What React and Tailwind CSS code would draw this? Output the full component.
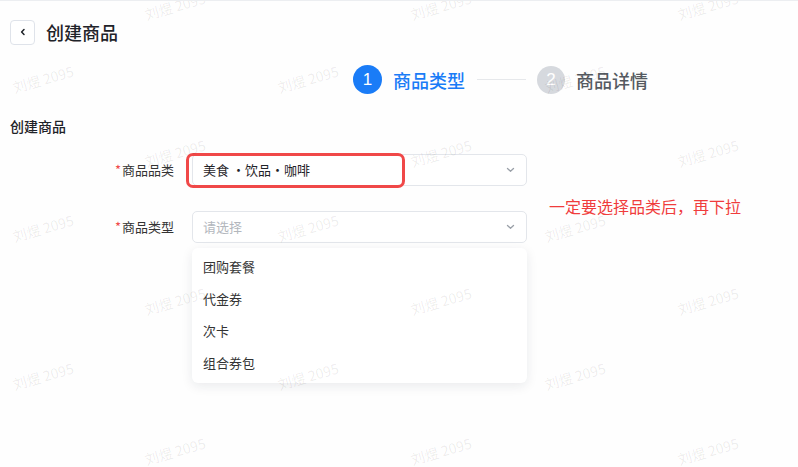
import React from "react";

const WM = [
  [177, 5], [443, 5], [710, 5],
  [45, 78], [310, 78], [577, 78],
  [177, 152], [443, 152], [710, 152],
  [45, 227], [310, 227], [577, 227],
  [177, 300], [443, 300], [710, 300],
  [45, 375], [310, 375], [577, 375],
  [177, 450], [443, 450], [710, 450],
];

function Chevron() {
  return (
    <svg width="9" height="6" viewBox="0 0 9 6" fill="none">
      <path d="M1.5 1.5 L4.5 4.3 L7.5 1.5" stroke="#9aa0a8" strokeWidth="1.3" strokeLinecap="round" strokeLinejoin="round" />
    </svg>
  );
}

export default function App() {
  return (
    <div
      className="relative w-[798px] h-[467px] overflow-hidden bg-[#fefefe] border-t border-[#eceef1]"
      style={{ fontFamily: '"Noto Sans CJK SC", "Noto Sans", sans-serif' }}
    >
      {/* header */}
      <div className="flex items-center px-[10px] pt-[18px]">
        <div className="w-[25px] h-[25px] flex items-center justify-center border border-[#dfe3ea] rounded-[4px] bg-white">
          <svg width="8" height="8" viewBox="0 0 8 8" fill="none">
            <path d="M5 1.5 L2.6 4 L5 6.5" stroke="#1f2329" strokeWidth="1.5" strokeLinecap="round" strokeLinejoin="round" />
          </svg>
        </div>
        <div className="ml-[11px] text-[18px] leading-[26px] font-medium text-[#1f2329]">创建商品</div>
      </div>

      {/* steps */}
      <div className="flex items-center ml-[353px] mt-[20px] h-[29px]">
        <div className="w-[29px] h-[29px] rounded-full bg-[#1a7cf7] text-white text-[17px] font-medium flex items-center justify-center" style={{ fontFamily: '"Liberation Sans", sans-serif' }}>1</div>
        <div className="ml-[11px] text-[18px] leading-[26px] font-medium text-[#1a7cf7]">商品类型</div>
        <div className="ml-[12px] w-[49px] h-px bg-[#e6e8eb]" />
        <div className="ml-[11px] w-[28px] h-[28px] rounded-full bg-[#d6d9de] text-white text-[17px] font-medium flex items-center justify-center" style={{ fontFamily: '"Liberation Sans", sans-serif' }}>2</div>
        <div className="ml-[11px] text-[18px] leading-[26px] font-medium text-[#555a61]">商品详情</div>
      </div>

      {/* section title */}
      <div className="px-[10px] mt-[22px] text-[14px] leading-[20px] font-medium text-[#1f2329]">创建商品</div>

      {/* form */}
      <div className="mt-[18px] px-[10px]">
        <div className="flex items-center">
          <div className="w-[164px] text-right text-[13px] text-[#333] leading-[20px]">
            <span className="text-[#f04a4a] mr-[1px]">*</span>商品品类
          </div>
          <div className="relative ml-[18px] w-[335px] h-[32px] border border-[#e3e6eb] rounded-[5px] bg-white flex items-center justify-between pl-[10px] pr-[11px]">
            <span className="text-[13px] text-[#1f2329] whitespace-pre">美食 ・饮品・咖啡</span>
            <Chevron />
            <div className="absolute left-[-7px] top-[-2px] w-[219px] h-[35px] border-[3px] border-[#f04848] rounded-[7px]" />
          </div>
        </div>

        <div className="flex items-center mt-[25px]">
          <div className="w-[164px] text-right text-[13px] text-[#333] leading-[20px]">
            <span className="text-[#f04a4a] mr-[1px]">*</span>商品类型
          </div>
          <div className="relative ml-[18px] w-[335px] h-[32px] border border-[#e3e6eb] rounded-[5px] bg-white flex items-center justify-between pl-[10px] pr-[11px]">
            <span className="text-[13px] text-[#b3b7bd]">请选择</span>
            <Chevron />
            <div className="absolute left-[-1px] top-[36px] w-[335px] h-[135px] bg-white rounded-[6px] shadow-[0_3px_12px_rgba(20,30,60,0.09)] py-[3px]">
              {["团购套餐", "代金券", "次卡", "组合券包"].map((t) => (
                <div key={t} className="h-[32px] flex items-center pl-[11px] text-[13px] text-[#333]">{t}</div>
              ))}
            </div>
          </div>
        </div>
      </div>

      {/* annotation */}
      <div className="absolute left-[549px] top-[194px] text-[16px] leading-[22px] text-[#f03c3c]">一定要选择品类后，再下拉</div>

      {/* watermark */}
      <div className="pointer-events-none absolute inset-0">
        {WM.map(([x, y], i) => (
          <div
            key={i}
            className="absolute text-[14px] leading-[16px] text-[rgba(0,0,0,0.08)] whitespace-nowrap"
            style={{ left: x - 33, top: y - 8, transform: "rotate(-16deg)" }}
          >
            刘煜 2095
          </div>
        ))}
      </div>
    </div>
  );
}
